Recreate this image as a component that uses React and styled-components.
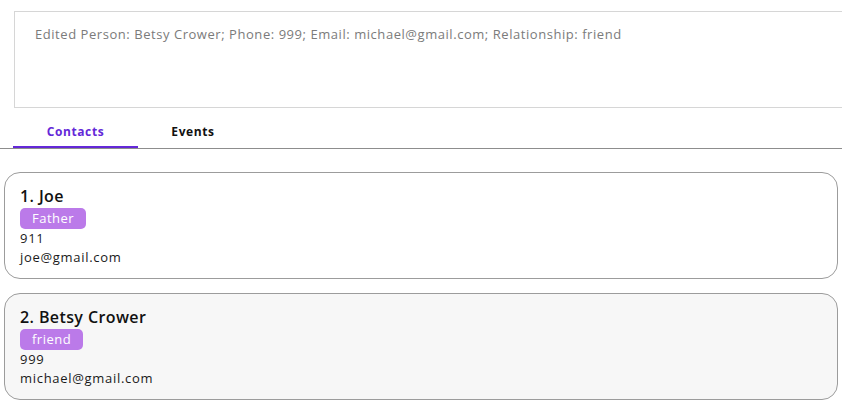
import React from "react";
import styled, { createGlobalStyle } from "styled-components";

const Global = createGlobalStyle`
  html, body { margin: 0; padding: 0; background: #ffffff; }
  body { font-family: "Open Sans", "Noto Sans", sans-serif; overflow: hidden; }
`;

const Page = styled.div`
  width: 842px;
  height: 412px;
  overflow: hidden;
  display: flex;
  flex-direction: column;
`;

const ResultBox = styled.div`
  margin: 11px 0 0 14px;
  height: 97px;
  box-sizing: border-box;
  border: 1px solid #d6d6d6;
  border-right: none;
  padding: 13px 20px;
  color: #7b7b7b;
  font-size: 13px;
  letter-spacing: 0.55px;
`;

const TabBar = styled.div`
  display: flex;
  height: 40px;
  padding-left: 13px;
  border-bottom: 1px solid #8d8d8d;
`;

const Tab = styled.div`
  width: ${(p) => p.$w}px;
  display: flex;
  align-items: center;
  justify-content: center;
  box-sizing: border-box;
  padding-top: 8px;
  font-size: 12px;
  font-weight: 700;
  letter-spacing: 0.6px;
  color: ${(p) => (p.$active ? "#6428d8" : "#111111")};
  border-bottom: 2px solid ${(p) => (p.$active ? "#6428d8" : "transparent")};
`;

const List = styled.div`
  display: flex;
  flex-direction: column;
  gap: 14px;
  padding: 23px 4px 0 4px;
`;

const Card = styled.div`
  height: 107px;
  box-sizing: border-box;
  border: 1px solid #9c9c9c;
  border-radius: 16px;
  background: ${(p) => (p.$alt ? "#f7f7f7" : "#ffffff")};
  padding: 12px 15px;
  display: flex;
  flex-direction: column;
  align-items: flex-start;
  color: #1a1a1a;
`;

const Name = styled.div`
  font-size: 16px;
  font-weight: 600;
  line-height: 22px;
  letter-spacing: 0.4px;
  color: #111111;
`;

const Tag = styled.span`
  background: #bb7ae9;
  color: #ffffff;
  border-radius: 5px;
  font-size: 13px;
  line-height: 21px;
  letter-spacing: 0.5px;
  padding: 0 12px;
  margin: 1px 0 0 0;
`;

const Line = styled.div`
  font-size: 13px;
  line-height: 19px;
  letter-spacing: 0.7px;
`;

const people = [
  { n: "1. Joe", tag: "Father", phone: "911", email: "joe@gmail.com" },
  { n: "2. Betsy Crower", tag: "friend", phone: "999", email: "michael@gmail.com", alt: true },
];

export default function App() {
  return (
    <Page>
      <Global />
      <ResultBox>
        Edited Person: Betsy Crower; Phone: 999; Email: michael@gmail.com; Relationship: friend
      </ResultBox>
      <TabBar>
        <Tab $active $w={125}>Contacts</Tab>
        <Tab $w={110}>Events</Tab>
      </TabBar>
      <List>
        {people.map((p) => (
          <Card key={p.n} $alt={p.alt}>
            <Name>{p.n}</Name>
            <Tag>{p.tag}</Tag>
            <Line>{p.phone}</Line>
            <Line>{p.email}</Line>
          </Card>
        ))}
      </List>
    </Page>
  );
}
